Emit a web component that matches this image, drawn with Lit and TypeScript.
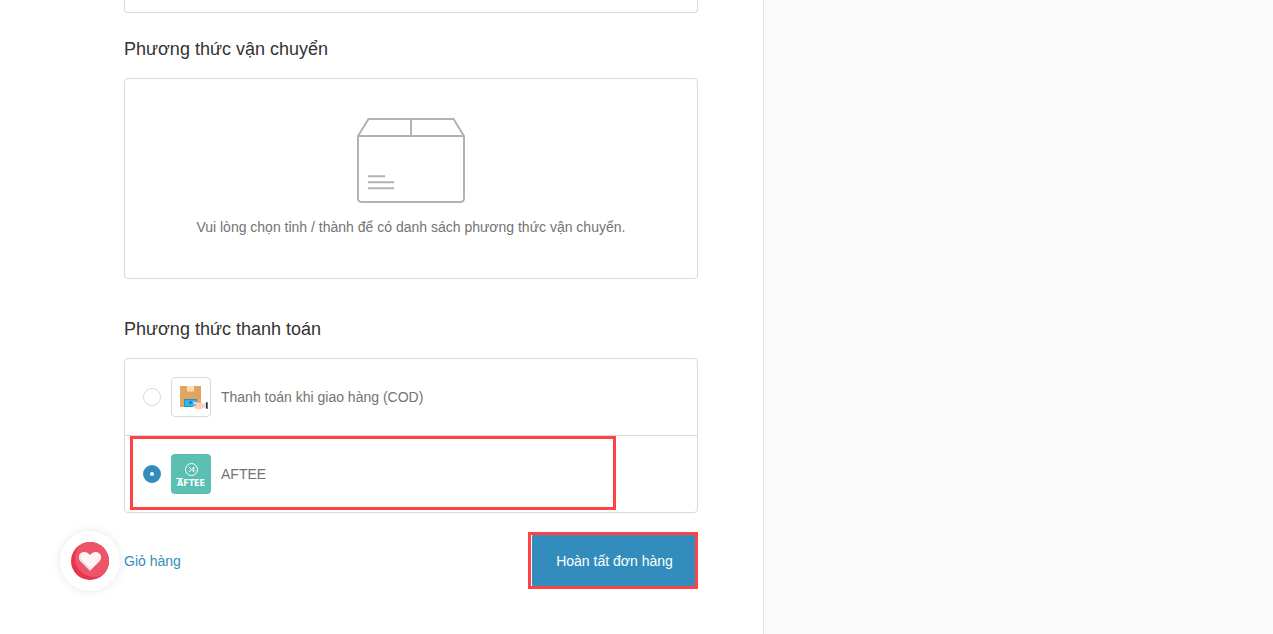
import { LitElement, html, css, svg } from "lit";
import { customElement, state } from "lit/decorators.js";

const boxIcon = svg`
  <g fill="none" stroke="#b2b2b2" stroke-width="2">
    <path d="M1 18V80.500a3.500 3.500 0 0 0 3.500 3.500H103.500a3.500 3.500 0 0 0 3.500-3.500V18L96.500 1H11.500L1 18H107M54 1V18" />
    <path d="M11 58.300H28M11 64.300H37M11 70.300H37" />
  </g>`;

@customElement("cod-icon")
class CodIcon extends LitElement {
  static styles = css`
    :host { display: block; }
    svg { display: block; }
  `;
  render() {
    return html`<svg width="40" height="40" viewBox="0 0 40 40" aria-hidden="true">
      <rect x="0.5" y="0.5" width="39" height="39" rx="3.5" fill="#fff" stroke="#d9d9d9" />
      <path d="M9 9H30V30H9Z" fill="#e2a55f" />
      <path d="M16 9h7v6l-1.200-1-1.200 1-1.200-1-1.200 1-1.200-1-1 1Z" fill="#fddcb4" />
      <path d="M13 22H26V30H13Z" fill="#1a96d4" />
      <path d="M14 23H25V29H14Z" fill="#35b5f2" />
      <circle cx="19.500" cy="25.500" r="1.500" fill="#1380b8" />
      <path d="M22 25.300c2-.8 3.500-.4 5 .2l3 .8 4 .2v4l-3.500 1.200c-2 .8-5 .8-6.500-.3l-2.500-2.600h4.500c-1.500-.9-3.500-1.500-4-3.500Z" fill="#fdd0bb" />
      <path d="M33.500 26h1.500v5h-1.500Z" fill="#dfe7ea" />
      <path d="M35 25.300h1.700v6.400H35Z" fill="#26323a" />
    </svg>`;
  }
}

@customElement("aftee-icon")
class AfteeIcon extends LitElement {
  static styles = css`
    :host { display: block; }
    svg { display: block; }
    text {
      fill: #fff;
      font: 700 8px "DejaVu Sans", Verdana, sans-serif;
      text-anchor: middle;
    }
  `;
  render() {
    return html`<svg width="40" height="40" viewBox="0 0 40 40" aria-hidden="true">
      <rect width="40" height="40" rx="4" fill="#5bc0b2" />
      <g fill="none" stroke="#fff" stroke-width="1">
        <circle cx="20.500" cy="15.500" r="6" />
        <path d="M18 13l2.500 2.500L18 18M22.800 13.200L20.500 15.500l2.300 2.300M22.800 12.800v5.400" />
        <path d="M5 24.500h7" />
      </g>
      <text x="20" y="32">AFTEE</text>
    </svg>`;
  }
}

@customElement("wish-button")
class WishButton extends LitElement {
  static styles = css`
    button {
      display: grid;
      place-items: center;
      width: 60px;
      height: 60px;
      padding: 0;
      border: 0;
      border-radius: 50%;
      background: #fff;
      box-shadow: 0 0 10px rgba(0, 0, 0, 0.1);
      cursor: pointer;
    }
  `;
  render() {
    return html`<button type="button" aria-label="Yêu thích">
      <svg width="38" height="38" viewBox="0 0 38 38" aria-hidden="true">
        <clipPath id="disc"><circle cx="19" cy="19" r="19" /></clipPath>
        <circle cx="19" cy="19" r="19" fill="#e9344f" />
        <circle cx="23" cy="16" r="19" fill="#ed5468" clip-path="url(#disc)" />
        <path d="M19 28.800L9.500 19.300C7.300 16.700 7.300 13.400 9.800 11.300C12.500 9.200 16.500 9.700 19 13C21.500 9.700 25.500 9.200 28.200 11.300C30.700 13.400 30.700 16.700 28.500 19.300Z" fill="#fff3f3" />
        <path d="M19 28.800L9.500 19.300C7.300 16.700 7.300 13.400 9.800 11.300C10.300 10.900 11 10.500 11.600 10.300C9 12.800 9 16.200 11.200 18.800L20 27.800Z" fill="#d5e2ea" />
      </svg>
    </button>`;
  }
}

@customElement("app-root")
class AppRoot extends LitElement {
  @state() method = "aftee";

  static styles = css`
    :host {
      display: grid;
      grid-template-columns: 3fr 2fr;
      min-height: 100vh;
      overflow: hidden;
      background: #fff;
      color: #737373;
      font: 14px/20px "Liberation Sans", Arial, sans-serif;
    }
    * { box-sizing: border-box; }
    main {
      padding: 0 65px 0 124px;
      border-right: 1px solid #e1e1e1;
    }
    aside { background: #fafafa; }
    h2 {
      margin: 0 0 17px;
      color: #333;
      font-size: 18px;
      font-weight: 400;
      line-height: 24px;
    }
    .panel {
      border: 1px solid #d9d9d9;
      border-radius: 4px;
    }
    .address {
      height: 13px;
      margin-bottom: 24px;
      border-top: 0;
      border-top-left-radius: 0;
      border-top-right-radius: 0;
    }
    .empty {
      display: flex;
      flex-direction: column;
      align-items: center;
      gap: 14px;
      margin-bottom: 38px;
      padding: 39px 20px 41px;
      text-align: center;
    }
    .empty svg { display: block; }
    .empty p { margin: 0; }
    .option {
      position: relative;
      display: flex;
      align-items: center;
      gap: 10px;
      padding: 18px;
      cursor: pointer;
    }
    .option + .option { border-top: 1px solid #d9d9d9; }
    input {
      appearance: none;
      width: 18px;
      height: 18px;
      margin: 0;
      border: 1px solid #d9d9d9;
      border-radius: 50%;
      background: #fff;
      cursor: pointer;
    }
    input:checked {
      border: 7px solid #338dbc;
    }
    .mark {
      position: absolute;
      border: 3px solid #ff4345;
      pointer-events: none;
    }
    .mark-option {
      top: 0;
      bottom: 2px;
      left: 5px;
      width: 486px;
    }
    .mark-submit {
      inset: -1px 0 -1px -4px;
    }
    .footer {
      position: relative;
      display: flex;
      align-items: center;
      justify-content: space-between;
      padding: 20px 0 46px;
    }
    a {
      color: #338dbc;
      text-decoration: none;
    }
    .submit-wrap { position: relative; }
    .submit {
      display: block;
      height: 55px;
      padding: 0 25px 0 24px;
      border: 0;
      border-radius: 4px;
      background: #338dbc;
      color: #fff;
      font: inherit;
      cursor: pointer;
    }
    .wish {
      position: absolute;
      top: 18px;
      left: -64px;
    }
  `;

  option(id: string, label: string, icon: unknown, marked: boolean) {
    return html`<label class="option">
      <input
        type="radio"
        name="payment"
        .checked=${this.method === id}
        @change=${() => (this.method = id)}
      />
      ${icon}
      <span>${label}</span>
      ${marked ? html`<span class="mark mark-option"></span>` : null}
    </label>`;
  }

  render() {
    return html`
      <main>
        <div class="panel address"></div>
        <section>
          <h2>Phương thức vận chuyển</h2>
          <div class="panel empty">
            <svg width="108" height="85" viewBox="0 0 108 85" aria-hidden="true">${boxIcon}</svg>
            <p>Vui lòng chọn tỉnh / thành để có danh sách phương thức vận chuyển.</p>
          </div>
        </section>
        <section>
          <h2>Phương thức thanh toán</h2>
          <div class="panel">
            ${this.option("cod", "Thanh toán khi giao hàng (COD)", html`<cod-icon></cod-icon>`, false)}
            ${this.option("aftee", "AFTEE", html`<aftee-icon></aftee-icon>`, true)}
          </div>
        </section>
        <div class="footer">
          <wish-button class="wish"></wish-button>
          <a href="#cart">Giỏ hàng</a>
          <div class="submit-wrap">
            <button class="submit" type="submit">Hoàn tất đơn hàng</button>
            <span class="mark mark-submit"></span>
          </div>
        </div>
      </main>
      <aside></aside>
    `;
  }
}
